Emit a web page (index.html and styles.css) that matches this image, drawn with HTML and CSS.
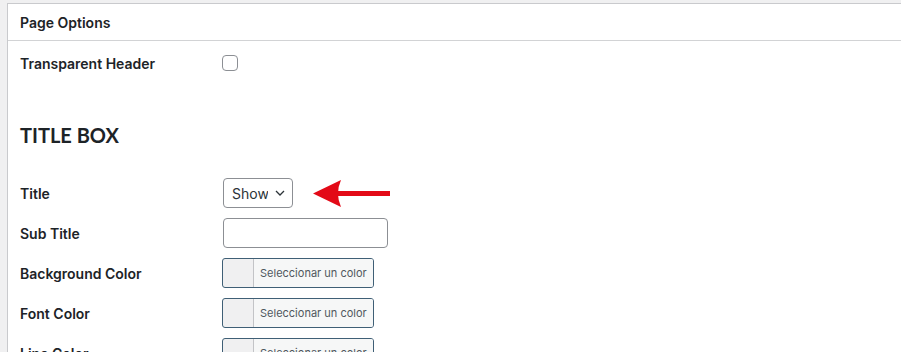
FILE: index.html
```html
<!DOCTYPE html>
<html lang="en">
<head>
    <meta charset="UTF-8">
    <title>Page Options</title>
    <link rel="stylesheet" href="styles.css">
</head>
<body>
    <div class="wrap">
        <div class="postbox">
            <div class="postbox-header">Page Options</div>
            <div class="inside">
                <div class="field first">
                    <label class="field-label">Transparent Header</label>
                    <div class="field-control">
                        <input type="checkbox" class="checkbox">
                    </div>
                </div>

                <h2 class="section-title">TITLE BOX</h2>

                <div class="field">
                    <label class="field-label">Title</label>
                    <div class="field-control">
                        <span class="select-wrap">
                            <select class="select">
                                <option>Show</option>
                                <option>Hide</option>
                            </select>
                            <svg class="chevron" width="10" height="6" viewBox="0 0 10 6">
                                <path d="M1 1l4 4 4-4" fill="none" stroke="#2c3338" stroke-width="1.3"/>
                            </svg>
                        </span>
                        <svg class="arrow" width="78" height="28" viewBox="0 0 78 28">
                            <rect x="22" y="12" width="56" height="5" fill="#e30a17"/>
                            <path d="M1 14.5L29 1Q23 14.5 29 28Z" fill="#e30a17"/>
                        </svg>
                    </div>
                </div>

                <div class="field">
                    <label class="field-label">Sub Title</label>
                    <div class="field-control">
                        <input type="text" class="text-input">
                    </div>
                </div>

                <div class="field">
                    <label class="field-label">Background Color</label>
                    <div class="field-control">
                        <button class="color-result"><span class="swatch"></span><span class="color-text">Seleccionar un color</span></button>
                    </div>
                </div>

                <div class="field">
                    <label class="field-label">Font Color</label>
                    <div class="field-control">
                        <button class="color-result"><span class="swatch"></span><span class="color-text">Seleccionar un color</span></button>
                    </div>
                </div>

                <div class="field">
                    <label class="field-label">Line Color</label>
                    <div class="field-control">
                        <button class="color-result"><span class="swatch"></span><span class="color-text">Seleccionar un color</span></button>
                    </div>
                </div>
            </div>
        </div>
    </div>
</body>
</html>
```

FILE: styles.css
```css
* {
    margin: 0;
    padding: 0;
    box-sizing: border-box;
}

body {
    font-family: Inter, "Liberation Sans", sans-serif;
    background: #f0f0f1;
    color: #1d2327;
    overflow: hidden;
}

.wrap {
    padding: 3px 0 0 7px;
}

.postbox {
    background: #fff;
    border: 1px solid #c9cacd;
    border-right: none;
    min-height: 400px;
}

.postbox-header {
    height: 37px;
    border-bottom: 1px solid #d2d3d5;
    padding: 0 12px;
    display: flex;
    align-items: center;
    font-size: 14px;
    font-weight: 600;
}

.inside {
    padding: 0 12px;
}

.field {
    display: flex;
    align-items: center;
    height: 40px;
}

.field.first {
    margin-top: 2px;
}

.field-label {
    width: 202px;
    font-size: 14px;
    font-weight: 600;
    color: #1d2327;
}

.field-control {
    display: flex;
    align-items: center;
}

.checkbox {
    appearance: none;
    width: 16px;
    height: 16px;
    border: 1px solid #8c8f94;
    border-radius: 4px;
    background: #fff;
}

.section-title {
    font-family: Lato, "Liberation Sans", sans-serif;
    font-size: 20px;
    font-weight: 700;
    line-height: 24px;
    margin: 40px 0 26px;
    color: #1d2327;
}

.select-wrap {
    position: relative;
    margin-left: 1px;
}

.select {
    appearance: none;
    width: 70px;
    height: 30px;
    border: 1px solid #8c8f94;
    border-radius: 4px;
    background: #fff;
    padding: 0 24px 0 8px;
    font-family: Inter, "Liberation Sans", sans-serif;
    font-size: 14px;
    color: #2c3338;
}

.chevron {
    position: absolute;
    left: 52px;
    top: 12px;
}

.arrow {
    margin-left: 19px;
}

.text-input {
    width: 165px;
    height: 30px;
    margin-left: 1px;
    border: 1px solid #8c8f94;
    border-radius: 4px;
    background: #fff;
}

.color-result {
    display: flex;
    width: 152px;
    height: 30px;
    border: 1px solid #3f5f76;
    border-radius: 3px;
    background: #f0f0f1;
    overflow: hidden;
}

.swatch {
    width: 30px;
    height: 100%;
}

.color-text {
    flex: 1;
    height: 100%;
    border-left: 1px solid #c3c4c7;
    background: #f6f7f7;
    padding: 0 6px;
    font-family: Inter, "Liberation Sans", sans-serif;
    font-size: 11px;
    line-height: 28px;
    color: #50575e;
    text-align: left;
    white-space: nowrap;
}
```
